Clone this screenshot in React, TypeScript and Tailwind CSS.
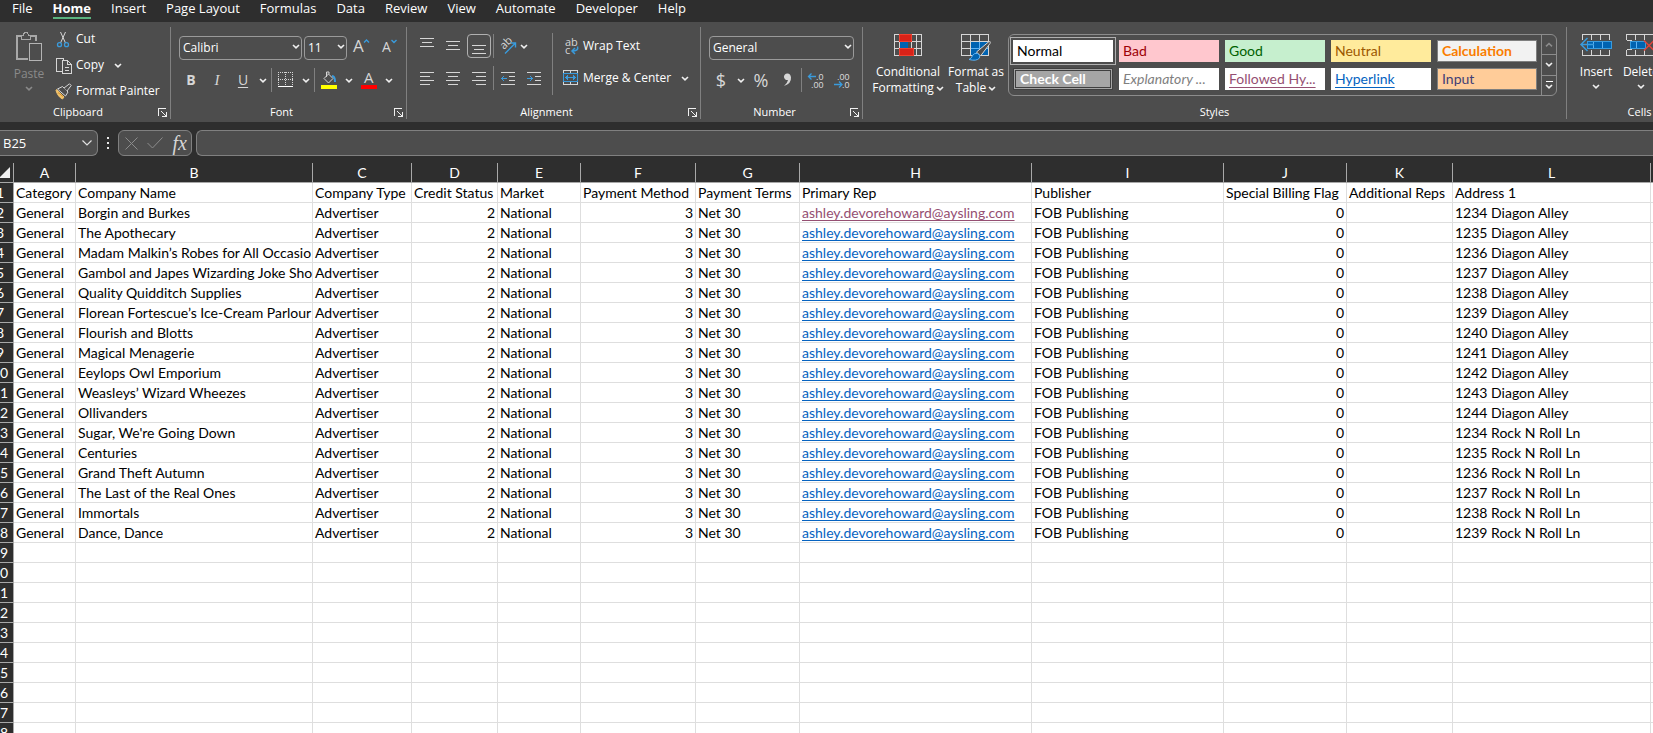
import type { ReactNode } from 'react';

const BLUE = '#3a9bdc';
const LIGHT = '#d6d6d6';

const tabs = ['File', 'Home', 'Insert', 'Page Layout', 'Formulas', 'Data', 'Review', 'View', 'Automate', 'Developer', 'Help'];

const columns = [
  { letter: 'A', width: 'w-[62px]' },
  { letter: 'B', width: 'w-[237px]' },
  { letter: 'C', width: 'w-[99px]' },
  { letter: 'D', width: 'w-[86px]' },
  { letter: 'E', width: 'w-[83px]' },
  { letter: 'F', width: 'w-[115px]' },
  { letter: 'G', width: 'w-[104px]' },
  { letter: 'H', width: 'w-[232px]' },
  { letter: 'I', width: 'w-[192px]' },
  { letter: 'J', width: 'w-[123px]' },
  { letter: 'K', width: 'w-[106px]' },
  { letter: 'L', width: 'w-[198px]' },
];

const headings = [
  'Category',
  'Company Name',
  'Company Type',
  'Credit Status',
  'Market',
  'Payment Method',
  'Payment Terms',
  'Primary Rep',
  'Publisher',
  'Special Billing Flag',
  'Additional Reps',
  'Address 1',
];

const companies = [
  ['Borgin and Burkes', '1234 Diagon Alley'],
  ['The Apothecary', '1235 Diagon Alley'],
  ['Madam Malkin’s Robes for All Occasio', '1236 Diagon Alley'],
  ['Gambol and Japes Wizarding Joke Sho', '1237 Diagon Alley'],
  ['Quality Quidditch Supplies', '1238 Diagon Alley'],
  ['Florean Fortescue’s Ice-Cream Parlour', '1239 Diagon Alley'],
  ['Flourish and Blotts', '1240 Diagon Alley'],
  ['Magical Menagerie', '1241 Diagon Alley'],
  ['Eeylops Owl Emporium', '1242 Diagon Alley'],
  ['Weasleys’ Wizard Wheezes', '1243 Diagon Alley'],
  ['Ollivanders', '1244 Diagon Alley'],
  ["Sugar, We're Going Down", '1234 Rock N Roll Ln'],
  ['Centuries', '1235 Rock N Roll Ln'],
  ['Grand Theft Autumn', '1236 Rock N Roll Ln'],
  ['The Last of the Real Ones', '1237 Rock N Roll Ln'],
  ['Immortals', '1238 Rock N Roll Ln'],
  ['Dance, Dance', '1239 Rock N Roll Ln'],
];

const rows: string[][] = [
  headings,
  ...companies.map(([name, address]) => [
    'General',
    name,
    'Advertiser',
    '2',
    'National',
    '3',
    'Net 30',
    'ashley.devorehoward@aysling.com',
    'FOB Publishing',
    '0',
    '',
    address,
  ]),
  ...Array.from({ length: 10 }, () => Array(12).fill('')),
];

const cellStyles = [
  { name: 'Normal', look: 'bg-white text-black outline outline-offset-2 outline-[#b0b0b0]' },
  { name: 'Bad', look: 'bg-[#ffc7ce] text-[#9c0006]' },
  { name: 'Good', look: 'bg-[#c6efce] text-[#006100]' },
  { name: 'Neutral', look: 'bg-[#ffeb9c] text-[#9c5700]' },
  { name: 'Calculation', look: 'bg-[#f2f2f2] text-[#fa7d00] font-bold border border-[#7f7f7f]' },
  { name: 'Check Cell', look: 'bg-[#a5a5a5] text-white font-bold border-3 border-double border-[#3f3f3f]' },
  { name: 'Explanatory ...', look: 'bg-white text-[#7f7f7f] italic' },
  { name: 'Followed Hy...', look: 'bg-white text-[#954f72] underline underline-offset-3' },
  { name: 'Hyperlink', look: 'bg-white text-[#0563c1] underline underline-offset-3' },
  { name: 'Input', look: 'bg-[#ffcc99] text-[#3f3f76] border border-[#7f7f7f]' },
];

type IconProps = { w: number; h: number; smooth?: boolean; children: ReactNode };

const Icon = ({ w, h, smooth, children }: IconProps) => (
  <svg
    width={w}
    height={h}
    viewBox={`0 0 ${w} ${h}`}
    fill="none"
    stroke={LIGHT}
    shapeRendering={smooth ? 'auto' : 'crispEdges'}
    className="shrink-0 overflow-visible"
    aria-hidden="true"
  >
    {children}
  </svg>
);

const Chevron = ({ color = '#f0f0f0' }: { color?: string }) => (
  <Icon w={8} h={5} smooth>
    <path d="M1 1l3 2.8L7 1" stroke={color} strokeWidth="1.6" />
  </Icon>
);

/* horizontal strokes given as [x1, x2, y] */
const Lines = ({ w = 15, h = 14, lines }: { w?: number; h?: number; lines: number[][] }) => (
  <Icon w={w} h={h}>
    {lines.map(([x1, x2, y]) => (
      <path key={y} d={`M${x1} ${y + 0.5}H${x2}`} />
    ))}
  </Icon>
);

const IconButton = ({ label, active, children }: { label: string; active?: boolean; children: ReactNode }) => (
  <button
    aria-label={label}
    className={`flex h-6 w-6 shrink-0 items-center justify-center rounded hover:bg-white/10 ${active ? 'border border-[#b0b0b0]' : ''}`}
  >
    {children}
  </button>
);

const MenuArrow = ({ label }: { label: string }) => (
  <button aria-label={label} className="flex h-6 w-3 shrink-0 items-center justify-center hover:bg-white/10">
    <Chevron />
  </button>
);

const Divider = () => <span className="h-6 w-px shrink-0 bg-[#808080]" />;

const Dropdown = ({ label, value, width }: { label: string; value: string; width: string }) => (
  <div className={`relative shrink-0 ${width}`}>
    <select
      aria-label={label}
      defaultValue={value}
      className="h-6 w-full appearance-none rounded border border-[#9a9a9a] bg-transparent pl-[3px] text-xs text-white"
    >
      <option>{value}</option>
    </select>
    <span className="pointer-events-none absolute right-0.5 top-0 flex h-6 items-center">
      <Chevron />
    </span>
  </div>
);

const Group = ({ title, width, launcher, children }: { title: string; width: string; launcher?: boolean; children: ReactNode }) => (
  <section className={`flex shrink-0 flex-col border-r border-[#808080] ${width}`} aria-label={title}>
    <div className="h-[78px]">{children}</div>
    <div className="flex h-3.5 items-center">
      <span className="flex-1 text-center text-[11px] leading-3.5">{title}</span>
      {launcher && (
        <button aria-label={`${title} settings`} className="ml-0.5 mr-[3px]">
          <Icon w={9} h={9}>
            <path d="M.5 8V.5H8M8.500 4V8.500H4M3 3l5 5" stroke="#f0f0f0" />
          </Icon>
        </button>
      )}
    </div>
  </section>
);

const ClipboardGroup = () => (
  <Group title="Clipboard" width="w-[171px]" launcher>
    <div className="flex">
      <button className="flex w-[54px] flex-col items-center gap-1 pl-1 pt-1 text-[#8a8a8a]">
        <Icon w={28} h={31}>
          <path d="M7 4.500H1.500V27.500H13M16 4.500H20.500V10" stroke="#a8a8a8" strokeWidth="2" />
          <path d="M6.500 8.500V4.500H8.500Q9 1 11 1T13.500 4.500H15.500V8.500Z" stroke="#a8a8a8" />
          <path d="M14.500 12.500H26.500V29.500H14.500Z" stroke="#b4b4b4" />
        </Icon>
        <span className="text-xs leading-4">Paste</span>
        <Chevron color="#8a8a8a" />
      </button>
      <div className="flex flex-col">
        <button className="flex h-6 items-center gap-1 text-xs">
          <Icon w={18} h={17} smooth>
            <path d="M6.500 1l5 11M11.500 1L6.500 12" />
            <circle cx="5.500" cy="13.700" r="2" stroke={BLUE} strokeWidth="1.300" />
            <circle cx="12.500" cy="13.700" r="2" stroke={BLUE} strokeWidth="1.300" />
          </Icon>
          Cut
        </button>
        <div className="flex h-7 items-center">
          <button className="flex items-center gap-1 text-xs">
            <Icon w={18} h={17}>
              <path d="M8 14.500H2.500V1.500H9.500V3M8.500 3.500H13.500L17.500 7.500V16.500H8.500ZM13.500 3.500V7.500H17.500" />
              <path d="M11 10.500H15M11 13.500H15" />
            </Icon>
            Copy
          </button>
          <span className="w-2" />
          <MenuArrow label="Copy options" />
        </div>
        <button className="flex h-6 items-center gap-1 text-xs">
          <Icon w={18} h={17} smooth>
            <path d="M2.500 6.500l7.500 7.500-1.500 2Q4 14 2 7.500Z" fill="#f2c36b" stroke="#f2c36b" />
            <path d="M3.500 6L8.500 3.500 14 9 11.500 13Z" fill="#4d4d4d" />
            <path d="M10 5L15.500 .8l1.700 1.700L13 8" fill="#4d4d4d" />
            <path d="M4 9.500l5 4" stroke="#d18f2c" />
          </Icon>
          Format Painter
        </button>
      </div>
    </div>
  </Group>
);

const FontGroup = () => (
  <Group title="Font" width="w-[236px]" launcher>
    <div className="flex flex-col gap-2 pl-2 pt-[7px]">
      <div className="flex gap-0.5">
        <Dropdown label="Font" value="Calibri" width="w-[123px]" />
        <Dropdown label="Font size" value="11" width="w-[43px]" />
        <div className="flex gap-1">
          <IconButton label="Increase font size">
            <Icon w={18} h={16} smooth>
              <text x="1" y="14" fontSize="17" fill={LIGHT} stroke="none">A</text>
              <path d="M12 4.500l2.500-2.500L17 4.500" stroke={BLUE} strokeWidth="1.400" />
            </Icon>
          </IconButton>
          <IconButton label="Decrease font size">
            <Icon w={16} h={16} smooth>
              <text x="1" y="14" fontSize="14" fill={LIGHT} stroke="none">A</text>
              <path d="M10.500 2l2.500 2.500L15.500 2" stroke={BLUE} strokeWidth="1.400" />
            </Icon>
          </IconButton>
        </div>
      </div>
      <div className="flex gap-0.5">
        <IconButton label="Bold"><b className="text-sm text-[#d6d6d6]">B</b></IconButton>
        <IconButton label="Italic"><i className="font-['Liberation_Serif',serif] text-[15px] text-[#d6d6d6]">I</i></IconButton>
        <IconButton label="Underline"><u className="text-sm text-[#d6d6d6] underline-offset-2">U</u></IconButton>
        <MenuArrow label="Underline options" />
        <Divider />
        <IconButton label="Borders">
          <Icon w={16} h={16}>
            <path d="M0 .5H16M0 7.500H16M.5 0V14M7.500 0V14M14.500 0V14" strokeDasharray="1 1" />
            <path d="M0 14.500H15" stroke="#ffffff" />
          </Icon>
        </IconButton>
        <MenuArrow label="Border options" />
        <Divider />
        <IconButton label="Fill color">
          <Icon w={16} h={18} smooth>
            <path d="M7 2.500L12 7.500 7.500 12 3 7.500 8 2.500V1H5.500V6" />
            <path d="M11 5q3 0 3 6" stroke={BLUE} strokeWidth="2" />
            <path d="M0 14H16V18H0Z" fill="#ffff00" stroke="none" />
          </Icon>
        </IconButton>
        <MenuArrow label="Fill color options" />
        <IconButton label="Font color">
          <Icon w={16} h={18} smooth>
            <text x="3" y="12" fontSize="15" fill={LIGHT} stroke="none">A</text>
            <path d="M0 14H16V18H0Z" fill="#ff0000" stroke="none" />
          </Icon>
        </IconButton>
        <MenuArrow label="Font color options" />
      </div>
    </div>
  </Group>
);

const AlignmentGroup = () => (
  <Group title="Alignment" width="w-[294px]" launcher>
    <div className="flex gap-1.5 pl-2">
      <div className="flex flex-col gap-2 pt-[7px]">
        <div className="flex gap-0.5">
          <IconButton label="Top align"><Lines h={18} lines={[[0, 14, 1], [2, 12, 5], [0, 14, 9]]} /></IconButton>
          <IconButton label="Middle align"><Lines h={18} lines={[[0, 14, 4], [2, 12, 8], [0, 14, 12]]} /></IconButton>
          <IconButton label="Bottom align" active><Lines h={18} lines={[[0, 14, 8], [2, 12, 12], [0, 14, 16]]} /></IconButton>
          <Divider />
          <button aria-label="Orientation" className="flex h-6 items-center gap-1 px-1">
            <Icon w={16} h={16} smooth>
              <text x="0" y="0" fontSize="11" fill={LIGHT} stroke="none" transform="translate(4 12) rotate(-45)">ab</text>
              <path d="M5 15.500L15 5.500M11 5H15.500V9.500" stroke={BLUE} strokeWidth="1.400" />
            </Icon>
            <Chevron />
          </button>
        </div>
        <div className="flex gap-0.5">
          <IconButton label="Align left"><Lines lines={[[0, 14, 1], [0, 10, 5], [0, 14, 9], [0, 10, 13]]} /></IconButton>
          <IconButton label="Center"><Lines lines={[[0, 14, 1], [2, 12, 5], [0, 14, 9], [2, 12, 13]]} /></IconButton>
          <IconButton label="Align right"><Lines lines={[[0, 14, 1], [4, 14, 5], [0, 14, 9], [4, 14, 13]]} /></IconButton>
          <Divider />
          <IconButton label="Decrease indent">
            <Icon w={15} h={14}>
              <path d="M0 1.500H14M8 5.500H14M8 9.500H14M0 13.500H14" />
              <path d="M0 7.500H6M3 5L.5 7.500 3 10" stroke={BLUE} />
            </Icon>
          </IconButton>
          <IconButton label="Increase indent">
            <Icon w={15} h={14}>
              <path d="M0 1.500H14M8 5.500H14M8 9.500H14M0 13.500H14" />
              <path d="M0 7.500H6M3 5L5.500 7.500 3 10" stroke={BLUE} />
            </Icon>
          </IconButton>
        </div>
      </div>
      <div className="mt-1.5 flex h-[62px] flex-col gap-2 border-l border-[#808080] pl-2.5 pt-px">
        <button className="flex h-6 items-center gap-1 text-xs">
          <Icon w={16} h={17} smooth>
            <g fill={LIGHT} stroke="none" fontSize="11">
              <text x="2" y="8">ab</text>
              <text x="2" y="16">c</text>
            </g>
            <path d="M14.500 8.500Q16 13 9 13M12 10L9 13l3 3" stroke={BLUE} strokeWidth="1.500" />
          </Icon>
          Wrap Text
        </button>
        <div className="flex items-center">
          <button className="flex h-6 items-center gap-1 text-xs">
            <Icon w={16} h={16}>
              <path d="M.5 3V.5H14.500V3M7.500 0V3M.5 12V14.500H14.500V12M7.500 12V15" />
              <path d="M.5 3.500H14.500V11.500H.5Z" stroke={BLUE} />
              <path d="M3 7.500H12M5 5.500L3 7.500 5 9.500M10 5.500L12 7.500 10 9.500" stroke={BLUE} />
            </Icon>
            Merge &amp; Center
          </button>
          <span className="w-2" />
          <MenuArrow label="Merge options" />
        </div>
      </div>
    </div>
  </Group>
);

const NumberGroup = () => (
  <Group title="Number" width="w-[162px]" launcher>
    <div className="flex flex-col gap-2 px-2 pt-[7px]">
      <Dropdown label="Number format" value="General" width="w-full" />
      <div className="flex items-center gap-0.5 text-[#d6d6d6]">
        <IconButton label="Accounting format"><span className="text-lg">$</span></IconButton>
        <MenuArrow label="Accounting options" />
        <IconButton label="Percent style"><span className="text-lg">%</span></IconButton>
        <IconButton label="Comma style">
          <Icon w={9} h={14} smooth>
            <path d="M4.500 .5a3.300 3.300 0 1 0 .5 6.500Q4.500 10 1 13 8.500 10.500 8 4.500 7.500 .5 4.500 .5Z" fill={LIGHT} stroke="none" />
          </Icon>
        </IconButton>
        <Divider />
        <IconButton label="Increase decimal">
          <Icon w={16} h={17} smooth>
            <g fill={LIGHT} stroke="none" fontSize="9" fontFamily="Liberation Sans">
              <text x="8" y="8">.0</text>
              <text x="3" y="16">.00</text>
            </g>
            <path d="M.5 4.500H8M3.500 1.500l-3 3 3 3" stroke={BLUE} strokeWidth="1.300" />
          </Icon>
        </IconButton>
        <IconButton label="Decrease decimal">
          <Icon w={16} h={17} smooth>
            <g fill={LIGHT} stroke="none" fontSize="9" fontFamily="Liberation Sans">
              <text x="3" y="8">.00</text>
              <text x="8" y="16">.0</text>
            </g>
            <path d="M0 12.500H8M5 9.500l3 3-3 3" stroke={BLUE} strokeWidth="1.300" />
          </Icon>
        </IconButton>
      </div>
    </div>
  </Group>
);

const StylesGroup = () => (
  <Group title="Styles" width="w-[704px]">
    <div className="flex justify-end pr-[9px] pt-[7px]">
      <button className="flex w-[72px] flex-col items-center gap-2 text-xs leading-4">
        <Icon w={28} h={22}>
          <path d="M.5 .5H27.500V21.500H.5ZM.5 7.500H27.500M.5 14.500H27.500M5.500 0V22M17.500 0V22M22.500 0V22" />
          <path d="M5.500 .5H17.500V7.500H5.500ZM5.500 14.500H19.500V21.500H5.500Z" fill="#d92218" stroke="#f0402f" />
          <path d="M6 8H14V14H6Z" fill="#0063b1" stroke="none" />
        </Icon>
        <span>
          Conditional
          <span className="flex items-center gap-0.5">Formatting <Chevron /></span>
        </span>
      </button>
      <button className="flex w-16 flex-col items-center gap-2 text-xs leading-4">
        <Icon w={31} h={22}>
          <path d="M.5 .5H27.500V21.500H.5ZM.5 7.500H27.500M.5 14.500H27.500M9.500 0V22M18.500 0V22" />
          <path d="M10 8H27V21H10Z" fill="#0063b1" stroke="none" />
          <path d="M18.500 7.500V21M9.500 14.500H27" stroke="#5fb2f2" />
          <g shapeRendering="auto">
            <path d="M15.500 18L27.500 8q2.500-1.500 1.500 1.500L19.500 22Z" fill="#4d4d4d" />
            <path d="M8 25.500q3-1.500 3.500-4 2-3 5-2 3.500 1.500 2 4.500-3 3.500-10.500 1.500Z" fill="#0063b1" stroke="#5fb2f2" />
          </g>
        </Icon>
        <span className="flex flex-col items-center">
          Format as
          <span className="flex items-center gap-0.5">Table <Chevron /></span>
        </span>
      </button>
      <div className="flex h-[62px] rounded-md border border-[#8c8c8c]">
        <div className="grid grid-cols-[repeat(5,100px)] content-start gap-1.5 pl-1 pr-1 pt-[5px]">
          {cellStyles.map(({ name, look }) => (
            <button key={name} className={`flex h-[22px] items-center px-1 font-['Lato',sans-serif] text-sm leading-4 ${look}`}>
              {name}
            </button>
          ))}
        </div>
        <div className="flex w-[15px] flex-col border-l border-[#8c8c8c]">
          <button aria-label="Previous styles" className="flex flex-1 rotate-180 items-center justify-center"><Chevron color="#8c8c8c" /></button>
          <button aria-label="Next styles" className="flex flex-1 items-center justify-center border-y border-[#8c8c8c]"><Chevron /></button>
          <button aria-label="More styles" className="flex flex-1 flex-col items-center justify-center gap-0.5">
            <span className="h-px w-[7px] bg-white" />
            <Chevron />
          </button>
        </div>
      </div>
    </div>
  </Group>
);

const CellsGroup = () => (
  <Group title="Cells" width="w-[146px]">
    <div className="flex gap-px pl-[7px] pt-[7px]">
      <button className="flex w-11 flex-col items-center gap-2 text-xs leading-4">
        <Icon w={32} h={22}>
          <path d="M2.500 6V.5H29.500V6M2.500 16V21.500H29.500V16M11.500 0V6M20.500 0V6M11.500 16V22M20.500 16V22" />
          <path d="M7.500 7.500H31.500V14.500H7.500Z" fill="#0063b1" stroke="#3a9bdc" />
          <path d="M13.500 8V14M22.500 8V14" stroke="#5fb2f2" />
          <path d="M1 10.500H14M7.500 4L1 10.500 7.500 17" stroke="#3a9bdc" shapeRendering="auto" strokeWidth="1.500" />
        </Icon>
        <span className="flex flex-col items-center gap-1">Insert <Chevron /></span>
      </button>
      <button className="flex w-11 flex-col items-center gap-2 text-xs leading-4">
        <Icon w={30} h={22}>
          <path d="M.5 6V.5H29M.5 6.500H6M.5 15.500H6M.5 16V21.500H29M9.500 0V6M18.500 0V6M9.500 16V22M18.500 16V22" />
          <path d="M4.500 7.500H19V14.500H4.500Z" fill="#0063b1" stroke="#3a9bdc" />
          <path d="M10.500 8V14" stroke="#5fb2f2" />
          <path d="M18 6.500L28 16.500M28 6.500L18 16.500" stroke="#e0433a" shapeRendering="auto" strokeWidth="1.500" />
        </Icon>
        <span className="flex flex-col items-center gap-1">Delete <Chevron /></span>
      </button>
    </div>
  </Group>
);

const FormulaBar = () => (
  <div className="mt-2 flex h-[26px] shrink-0 text-white">
    <div className="relative w-[98px] shrink-0">
      <input
        aria-label="Name box"
        defaultValue="B25"
        className="h-full w-full rounded-r-md border border-l-0 border-[#808080] bg-[#4d4d4d] pl-[3px] text-[13px]"
      />
      <span className="pointer-events-none absolute right-1.5 top-0 flex h-full items-center">
        <Icon w={10} h={6} smooth>
          <path d="M.5 .5L5 5 9.500 .5" stroke="#e0e0e0" strokeWidth="1.200" />
        </Icon>
      </span>
    </div>
    <div className="flex w-5 shrink-0 items-center justify-center">
      <Icon w={2} h={12}>
        <path d="M1 0V12" stroke="#e8e8e8" strokeWidth="2" strokeDasharray="2 3" />
      </Icon>
    </div>
    <div className="flex w-[74px] shrink-0 items-center justify-between rounded-md border border-[#808080] bg-[#4d4d4d] pl-1.5 pr-1">
      <button aria-label="Cancel">
        <Icon w={13} h={13} smooth><path d="M.5 .5l12 12M12.500 .5l-12 12" stroke="#8c8c8c" /></Icon>
      </button>
      <button aria-label="Enter">
        <Icon w={16} h={12} smooth><path d="M.5 6l5 5L15.500 .5" stroke="#8c8c8c" /></Icon>
      </button>
      <button className="font-['Liberation_Serif',serif] text-xl leading-5 text-[#d6d6d6] italic">fx</button>
    </div>
    <input
      aria-label="Formula"
      className="ml-1 min-w-0 flex-1 rounded-l-md border border-r-0 border-[#808080] bg-[#4d4d4d] px-2 text-[13px]"
    />
  </div>
);

const Cell = ({ value, row, col }: { value: string; row: number; col: number }) => {
  const numeric = row > 0 && /^\d$/.test(value);
  return (
    <td className={`h-5 overflow-hidden border-b border-r border-[#dedede] pl-0.5 leading-[19px] whitespace-nowrap ${numeric ? 'pr-0.5 text-right' : ''}`}>
      {value && col === 7 && row > 0 ? (
        <a
          href={`mailto:${value}`}
          className={`underline underline-offset-2 [text-decoration-skip-ink:none] ${row === 1 ? 'text-[#954f72]' : 'text-[#0563c1]'}`}
        >
          {value}
        </a>
      ) : (
        value
      )}
    </td>
  );
};

const Sheet = () => (
  <table className="mt-[7px] w-full min-w-[1653px] table-fixed border-separate border-spacing-0 bg-white font-['Lato',sans-serif] text-sm text-black [font-variant-ligatures:none]">
    <thead className="bg-[#2e2e2e] text-white">
      <tr>
        <th className="h-5 w-3.5 border-b border-r border-[#a8a8a8] p-0">
          <Icon w={11} h={11} smooth>
            <path d="M10 0V11H0V10Z" fill="#f0f0f0" stroke="none" />
          </Icon>
        </th>
        {columns.map(({ letter, width }) => (
          <th key={letter} className={`h-5 border-b border-r border-[#a8a8a8] p-0 leading-[19px] font-normal ${width}`}>
            {letter}
          </th>
        ))}
        <th className="h-5 border-b border-[#a8a8a8] p-0" />
      </tr>
    </thead>
    <tbody>
      {rows.map((cells, row) => (
        <tr key={row}>
          <th className="h-5 overflow-hidden border-b border-r border-[#a8a8a8] bg-[#2e2e2e] p-0 leading-[19px] font-normal text-white">
            <div className="-ml-3.5 w-7 text-center">{row + 1}</div>
          </th>
          {cells.map((value, col) => (
            <Cell key={col} value={value} row={row} col={col} />
          ))}
          <td className="border-b border-[#dedede]" />
        </tr>
      ))}
    </tbody>
  </table>
);

const App = () => (
  <div className="flex h-screen flex-col overflow-hidden bg-[#2e2e2e] font-['Open_Sans',sans-serif] text-white">
    <nav className="flex h-[22px] shrink-0 gap-5 pl-3 text-[13px] leading-4">
      {tabs.map((tab) => (
        <a
          key={tab}
          href="#"
          className={tab === 'Home' ? 'h-[19px] border-b-2 border-[#5bb37f] font-bold' : 'h-[19px]'}
        >
          {tab}
        </a>
      ))}
    </nav>
    <header className="flex shrink-0 overflow-hidden bg-[#4d4d4d] pb-[3px] pt-[5px]">
      <ClipboardGroup />
      <FontGroup />
      <AlignmentGroup />
      <NumberGroup />
      <StylesGroup />
      <CellsGroup />
    </header>
    <FormulaBar />
    <main className="min-h-0 flex-1 overflow-hidden">
      <Sheet />
    </main>
  </div>
);

export default App;
